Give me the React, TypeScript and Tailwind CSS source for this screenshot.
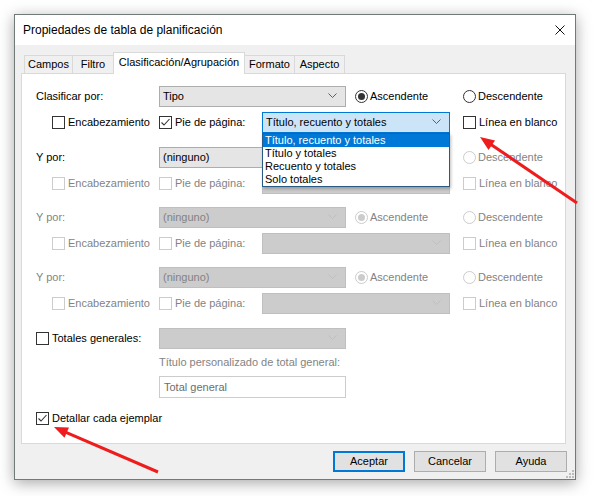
import React from "react";

const Chevron = ({ disabled }: { disabled?: boolean }) => (
  <svg width="9" height="6" viewBox="0 0 9 6" className="shrink-0">
    <path d="M0.5 0.5 L4.5 4.5 L8.5 0.5" fill="none" stroke={disabled ? "#bfbfbf" : "#5f5f5f"} strokeWidth="1" />
  </svg>
);

const Combo = ({
  value = "",
  width,
  disabled,
  open,
}: {
  value?: string;
  width: string;
  disabled?: boolean;
  open?: boolean;
}) => {
  const tone = open
    ? "bg-[#cce4f7] border-[#0078d7] text-black"
    : disabled
    ? "bg-[#cccccc] border-[#bfbfbf] text-[#838383]"
    : "bg-[#e5e5e5] border-[#adadad] text-black";
  return (
    <div className={`${width} h-[21px] border ${tone} flex items-center justify-between pl-[3px] pr-[8px]`}>
      <span className="leading-none">{value}</span>
      <Chevron disabled={disabled && !open} />
    </div>
  );
};

const Check = ({ label, checked, disabled, width }: { label: string; checked?: boolean; disabled?: boolean; width?: string }) => (
  <div className={`flex items-center gap-[3px] ${width ?? ""}`}>
    <div className={`w-[13px] h-[13px] border bg-white flex items-center justify-center ${disabled ? "border-[#cccccc]" : "border-[#333333]"}`}>
      {checked && (
        <svg width="11" height="11" viewBox="0 0 11 11">
          <path d="M1.5 5.5 L4 8 L9.5 2" fill="none" stroke="#333" strokeWidth="1.1" />
        </svg>
      )}
    </div>
    <span className={disabled ? "text-[#838383]" : "text-black"}>{label}</span>
  </div>
);

const Radio = ({ label, checked, disabled, width }: { label: string; checked?: boolean; disabled?: boolean; width?: string }) => (
  <div className={`flex items-center gap-[2px] ${width ?? ""}`}>
    <div className={`w-[13px] h-[13px] rounded-full border bg-white flex items-center justify-center ${disabled ? "border-[#cccccc]" : "border-[#333333]"}`}>
      {checked && <div className={`w-[7px] h-[7px] rounded-full ${disabled ? "bg-[#cccccc]" : "bg-[#333333]"}`} />}
    </div>
    <span className={disabled ? "text-[#838383]" : "text-black"}>{label}</span>
  </div>
);

const footerOptions = ["Título, recuento y totales", "Título y totales", "Recuento y totales", "Solo totales"];

const SortPair = ({
  label,
  value,
  labelDisabled,
  selectDisabled,
  radiosDisabled,
  footDisabled,
  footChecked,
  footOpen,
  className = "",
}: {
  label: string;
  value: string;
  labelDisabled?: boolean;
  selectDisabled?: boolean;
  radiosDisabled?: boolean;
  footDisabled?: boolean;
  footChecked?: boolean;
  footOpen?: boolean;
  className?: string;
}) => (
  <div className={`flex flex-col ${className}`}>
    <div className="h-[26px] flex items-center">
      <span className={`w-[123px] ${labelDisabled ? "text-[#838383]" : "text-black"}`}>{label}</span>
      <Combo value={value} width="w-[187px]" disabled={selectDisabled} />
      <Radio label="Ascendente" checked disabled={radiosDisabled} width="ml-[9px] w-[108px]" />
      <Radio label="Descendente" disabled={radiosDisabled} />
    </div>
    <div className="h-[26px] flex items-center pl-[16px]">
      <Check label="Encabezamiento" disabled={footDisabled} width="w-[107px]" />
      <Check label="Pie de página:" checked={footChecked} disabled={footDisabled} width="w-[103px]" />
      <div className="relative">
        <Combo value={footOpen ? footerOptions[0] : ""} width="w-[188px]" disabled={!footOpen} open={footOpen} />
        {footOpen && (
          <div className="absolute left-0 top-full z-20 w-[188px] border border-[#2a5a86] bg-white shadow-[1px_2px_3px_rgba(0,0,0,0.25)]">
            {footerOptions.map((o, i) => (
              <div key={o} className={`h-[13px] leading-[13px] pl-[2px] ${i === 0 ? "bg-[#0078d7] text-white" : "text-black"}`}>
                {o}
              </div>
            ))}
          </div>
        )}
      </div>
      <Check label="Línea en blanco" disabled={footDisabled} width="ml-[13px]" />
    </div>
  </div>
);

const tabs = [
  { name: "Campos", w: "w-[49px]" },
  { name: "Filtro", w: "w-[42px]" },
  { name: "Clasificación/Agrupación", w: "w-[132px]", active: true },
  { name: "Formato", w: "w-[51px]" },
  { name: "Aspecto", w: "w-[51px]" },
];

export default function App() {
  return (
    <div className="relative w-[595px] h-[496px] bg-white overflow-hidden font-['Liberation_Sans',Arial,sans-serif] text-[11px] text-black">
      <div className="ml-[14px] mt-[14px] w-[562px] h-[466px] border border-[#707a76] flex flex-col shadow-[0_3px_14px_rgba(0,0,0,0.35)]">
        {/* title bar */}
        <div className="h-[30px] bg-white flex items-center justify-between pl-[8px] pr-[10px]">
          <span className="text-[12px]">Propiedades de tabla de planificación</span>
          <svg width="10" height="10" viewBox="0 0 10 10">
            <path d="M0.5 0.5 L9.5 9.5 M9.5 0.5 L0.5 9.5" stroke="#111" strokeWidth="1" />
          </svg>
        </div>

        {/* client area */}
        <div className="relative flex-1 bg-[#f0f0f0] flex flex-col pt-[7px] pl-[6px] pr-[9px]">
          <div className="h-[21px] flex items-end pl-[3px]">
            {tabs.map((t, i) => (
              <div
                key={t.name}
                className={`${t.w} ${i > 0 ? "-ml-px" : ""} border border-b-0 border-[#d9d9d9] flex items-center justify-center ${
                  t.active ? "relative z-10 h-[22px] -mb-px bg-white pb-[3px]" : "h-[18px] bg-[#f0f0f0]"
                }`}
              >
                {t.name}
              </div>
            ))}
          </div>

          {/* tab page */}
          <div className="relative h-[371px] bg-white border border-[#d9d9d9] flex flex-col pt-[9px] pl-[14px]">
            <SortPair label="Clasificar por:" value="Tipo" footChecked footOpen />
            <SortPair label="Y por:" value="(ninguno)" radiosDisabled footDisabled className="mt-[9px]" />
            <SortPair label="Y por:" value="(ninguno)" labelDisabled selectDisabled radiosDisabled footDisabled className="mt-[8px]" />
            <SortPair label="Y por:" value="(ninguno)" labelDisabled selectDisabled radiosDisabled footDisabled className="mt-[8px]" />

            <div className="mt-[9px] h-[26px] flex items-center">
              <Check label="Totales generales:" width="w-[123px]" />
              <Combo width="w-[187px]" disabled />
            </div>
            <div className="mt-[4px] h-[14px] leading-[14px] pl-[123px] text-[#838383]">
              Título personalizado de total general:
            </div>
            <div className="mt-[7px] ml-[123px] w-[187px] h-[22px] border border-[#cccccc] bg-white flex items-center pl-[4px] text-[#6d6d6d]">
              Total general
            </div>
            <div className="mt-[7px] h-[26px] flex items-center">
              <Check label="Detallar cada ejemplar" checked />
            </div>
          </div>

          {/* dialog buttons */}
          <div className="mt-[7px] h-[21px] flex justify-end gap-[9px] -mr-px">
            <button className="w-[72px] h-[21px] bg-[#e1e1e1] border-2 border-[#0078d7]">Aceptar</button>
            <button className="w-[72px] h-[21px] bg-[#e1e1e1] border border-[#adadad]">Cancelar</button>
            <button className="w-[72px] h-[21px] bg-[#e1e1e1] border border-[#adadad]">Ayuda</button>
          </div>

          {/* size grip */}
          <svg className="absolute right-[1px] bottom-[1px]" width="8" height="8" viewBox="0 0 8 8">
            {[
              [6, 0],
              [3, 3],
              [6, 3],
              [0, 6],
              [3, 6],
              [6, 6],
            ].map(([x, y]) => (
              <rect key={`${x}-${y}`} x={x} y={y} width="2" height="2" fill="#bdbdbd" />
            ))}
          </svg>
        </div>
      </div>

      {/* red callout arrows */}
      <svg className="absolute inset-0 pointer-events-none" width="595" height="496" viewBox="0 0 595 496">
        <line x1="577" y1="203" x2="491" y2="144.5" stroke="#ee1c1c" strokeWidth="3" />
        <polygon points="480,137 495,140.5 488.5,150" fill="#ee1c1c" />
        <line x1="158" y1="472" x2="66" y2="432.3" stroke="#ee1c1c" strokeWidth="3" />
        <polygon points="54,427 69,427.5 64.5,437.8" fill="#ee1c1c" />
      </svg>
    </div>
  );
}
